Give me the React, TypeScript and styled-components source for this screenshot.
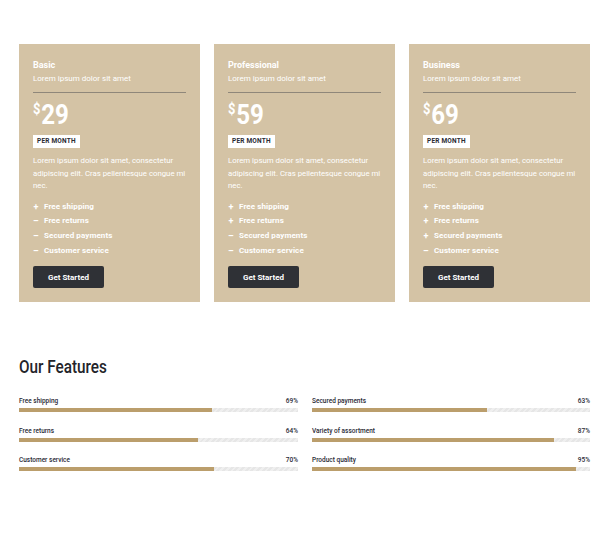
import React from "react";
import styled, { createGlobalStyle } from "styled-components";

const Global = createGlobalStyle`
  html, body { margin: 0; padding: 0; background: #ffffff; }
  body { font-family: Roboto, "Liberation Sans", sans-serif; color: #2b2b2b; }
  * { box-sizing: border-box; }
`;

const Page = styled.div`
  width: 610px;
  padding: 44px 20px 0 19px;
`;

const Cards = styled.div`
  display: grid;
  grid-template-columns: repeat(3, 181px);
  column-gap: 14px;
`;

const Card = styled.div`
  background: #d4c3a5;
  padding: 15px 14px 14px 14px;
  color: #ffffff;
  display: flex;
  flex-direction: column;
`;

const Title = styled.div`
  font-size: 9px;
  font-weight: 700;
  line-height: 12px;
`;

const Subtitle = styled.div`
  font-size: 8px;
  line-height: 12px;
  margin-top: 2px;
`;

const Rule = styled.div`
  height: 1px;
  background: #8f877a;
  margin-top: 7px;
`;

const Price = styled.div`
  display: flex;
  align-items: flex-start;
  margin-top: 10px;
  font-family: Roboto, sans-serif;
  font-weight: 700;
  height: 24px;
  transform: scaleX(0.86);
  transform-origin: left center;
`;

const Currency = styled.span`
  font-size: 15px;
  line-height: 14px;
  margin-top: -1px;
  margin-right: 1px;
`;

const Amount = styled.span`
  font-size: 28px;
  line-height: 24px;
`;

const Badge = styled.div`
  align-self: flex-start;
  background: #ffffff;
  color: #2b2b33;
  font-size: 6.5px;
  font-weight: 700;
  line-height: 13px;
  height: 13px;
  padding: 0 4px;
  margin-top: 8px;
  letter-spacing: 0.2px;
`;

const Desc = styled.p`
  margin: 7px 0 0 0;
  font-size: 7.8px;
  line-height: 12.5px;
`;

const FeatureList = styled.ul`
  list-style: none;
  margin: 7px 0 0 0;
  padding: 0;
`;

const Feature = styled.li`
  display: flex;
  align-items: center;
  font-size: 8px;
  font-weight: 700;
  line-height: 14.7px;
  letter-spacing: 0.1px;
`;

const Mark = styled.span`
  display: inline-block;
  width: 6px;
  margin-right: 5px;
  text-align: center;
  font-size: 9px;
  font-weight: 700;
`;

const Button = styled.button`
  align-self: flex-start;
  margin-top: 8px;
  width: 71px;
  height: 22px;
  background: #2f3136;
  color: #ffffff;
  border: none;
  border-radius: 2px;
  font-family: Roboto, "Liberation Sans", sans-serif;
  font-size: 8px;
  font-weight: 700;
  padding: 0;
`;

const Heading = styled.h2`
  margin: 53px 0 0 0;
  font-family: Roboto, sans-serif;
  font-size: 18px;
  font-weight: 500;
  color: #23242a;
  line-height: 24px;
  transform: scaleX(0.85);
  transform-origin: left center;
`;

const Bars = styled.div`
  display: grid;
  grid-template-columns: 279px 278px;
  column-gap: 14px;
  row-gap: 13.5px;
  margin-top: 17px;
`;

const BarItem = styled.div`
  display: flex;
  flex-direction: column;
`;

const BarHead = styled.div`
  display: flex;
  justify-content: space-between;
  font-size: 6.5px;
  font-weight: 500;
  line-height: 10px;
  color: #2a2a35;
`;

const Track = styled.div`
  margin-top: 2px;
  height: 4px;
  background: repeating-linear-gradient(
    -45deg,
    #e6e6e6 0px,
    #e6e6e6 2px,
    #efefef 2px,
    #efefef 4px
  );
`;

const Fill = styled.div`
  height: 100%;
  background: #bb9e6c;
`;

type Plan = { name: string; price: string; marks: boolean[] };

const plans: Plan[] = [
  { name: "Basic", price: "29", marks: [true, false, false, false] },
  { name: "Professional", price: "59", marks: [true, true, false, false] },
  { name: "Business", price: "69", marks: [true, true, true, false] },
];

const features = ["Free shipping", "Free returns", "Secured payments", "Customer service"];

const bars: [string, number][] = [
  ["Free shipping", 69],
  ["Secured payments", 63],
  ["Free returns", 64],
  ["Variety of assortment", 87],
  ["Customer service", 70],
  ["Product quality", 95],
];

export default function App() {
  return (
    <Page>
      <Global />
      <Cards>
        {plans.map((p) => (
          <Card key={p.name}>
            <Title>{p.name}</Title>
            <Subtitle>Lorem ipsum dolor sit amet</Subtitle>
            <Rule />
            <Price>
              <Currency>$</Currency>
              <Amount>{p.price}</Amount>
            </Price>
            <Badge>PER MONTH</Badge>
            <Desc>
              Lorem ipsum dolor sit amet, consectetur adipiscing elit. Cras pellentesque congue mi nec.
            </Desc>
            <FeatureList>
              {features.map((f, i) => (
                <Feature key={f}>
                  <Mark>{p.marks[i] ? "+" : "–"}</Mark>
                  {f}
                </Feature>
              ))}
            </FeatureList>
            <Button>Get Started</Button>
          </Card>
        ))}
      </Cards>
      <Heading>Our Features</Heading>
      <Bars>
        {bars.map(([label, v]) => (
          <BarItem key={label}>
            <BarHead>
              <span>{label}</span>
              <span>{v}%</span>
            </BarHead>
            <Track>
              <Fill style={{ width: `${v}%` }} />
            </Track>
          </BarItem>
        ))}
      </Bars>
    </Page>
  );
}
